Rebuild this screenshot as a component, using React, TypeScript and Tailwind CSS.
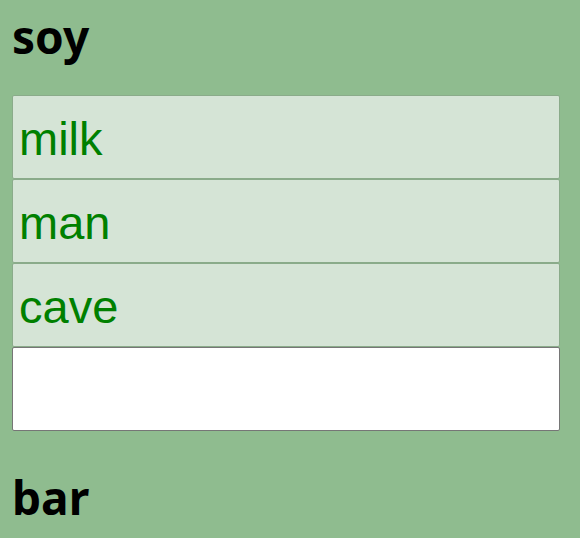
import { useState } from "react";

const items = ["milk", "man", "cave"];

export default function App() {
  const [draft, setDraft] = useState("");

  return (
    <div className="min-h-[538px] bg-[#8fbc8f] px-3 pt-[8px] font-['Noto_Sans',sans-serif]">
      <h2 className="text-[46px] leading-[56px] font-bold text-black">soy</h2>
      <div className="mt-[31px] flex w-[548px] flex-col">
        {items.map((item) => (
          <input
            key={item}
            readOnly
            value={item}
            className="h-[84px] w-full rounded-[2px] border border-[#8aab8a] bg-[#d5e4d6] px-[6px] pt-[2px] font-['Liberation_Sans',Arial,sans-serif] text-[47px] text-[#008000] outline-none"
          />
        ))}
        <input
          value={draft}
          onChange={(e) => setDraft(e.target.value)}
          className="h-[84px] w-full rounded-[2px] border border-[#767676] bg-white px-[6px] font-['Liberation_Sans',Arial,sans-serif] text-[47px] text-[#008000] outline-none"
        />
      </div>
      <h2 className="mt-[38px] text-[46px] leading-[56px] font-bold text-black">bar</h2>
    </div>
  );
}
